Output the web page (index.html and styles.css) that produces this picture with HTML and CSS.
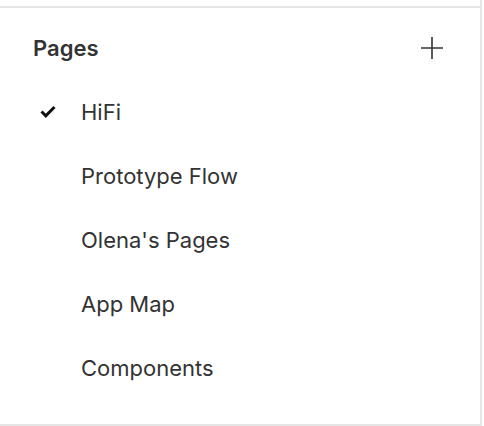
FILE: index.html
```html
<!DOCTYPE html>
<html>
<head>
<meta charset="utf-8">
<link rel="stylesheet" href="styles.css">
</head>
<body>
<div class="frame">
<div class="panel">
  <div class="header">
    <span class="title">Pages</span>
    <svg class="plus" width="22" height="22" viewBox="0 0 22 22"><path d="M11 0V22M0 11H22" stroke="#333" stroke-width="1.6" fill="none"/></svg>
  </div>
  <ul class="pages">
    <li class="page active"><svg class="check" width="16" height="13" viewBox="0 0 16 13"><path d="M1.5 6.5L5.8 10.8L14.5 2" stroke="#111" stroke-width="3" fill="none"/></svg><span>HiFi</span></li>
    <li class="page"><span>Prototype Flow</span></li>
    <li class="page"><span>Olena's Pages</span></li>
    <li class="page"><span>App Map</span></li>
    <li class="page"><span>Components</span></li>
  </ul>
</div>
</div>
</body>
</html>
```
FILE: styles.css
```css
html, body { margin: 0; padding: 0; background: #fff; }
body { font-family: Inter, "Noto Sans", sans-serif; color: #333; }
.frame {
  width: 482px;
  height: 426px;
  padding-top: 6px;
  box-sizing: border-box;
  border-right: 2px solid #e5e5e5;
}
.panel {
  height: 416px;
  border-top: 2px solid #e5e5e5;
  border-bottom: 2px solid #e5e5e5;
}
.header {
  display: flex;
  align-items: center;
  justify-content: space-between;
  padding: 24px 37px 0 33px;
  height: 32px;
}
.title { font-size: 22px; font-weight: 600; line-height: 32px; color: #333; }
.plus { display: block; }
.pages { list-style: none; margin: 0; padding: 16px 0 0 0; }
.page {
  display: flex;
  align-items: center;
  height: 64px;
  font-size: 22px;
  line-height: 32px;
  padding-left: 81px;
  position: relative;
}
.check { position: absolute; left: 40px; top: 25px; }
```
